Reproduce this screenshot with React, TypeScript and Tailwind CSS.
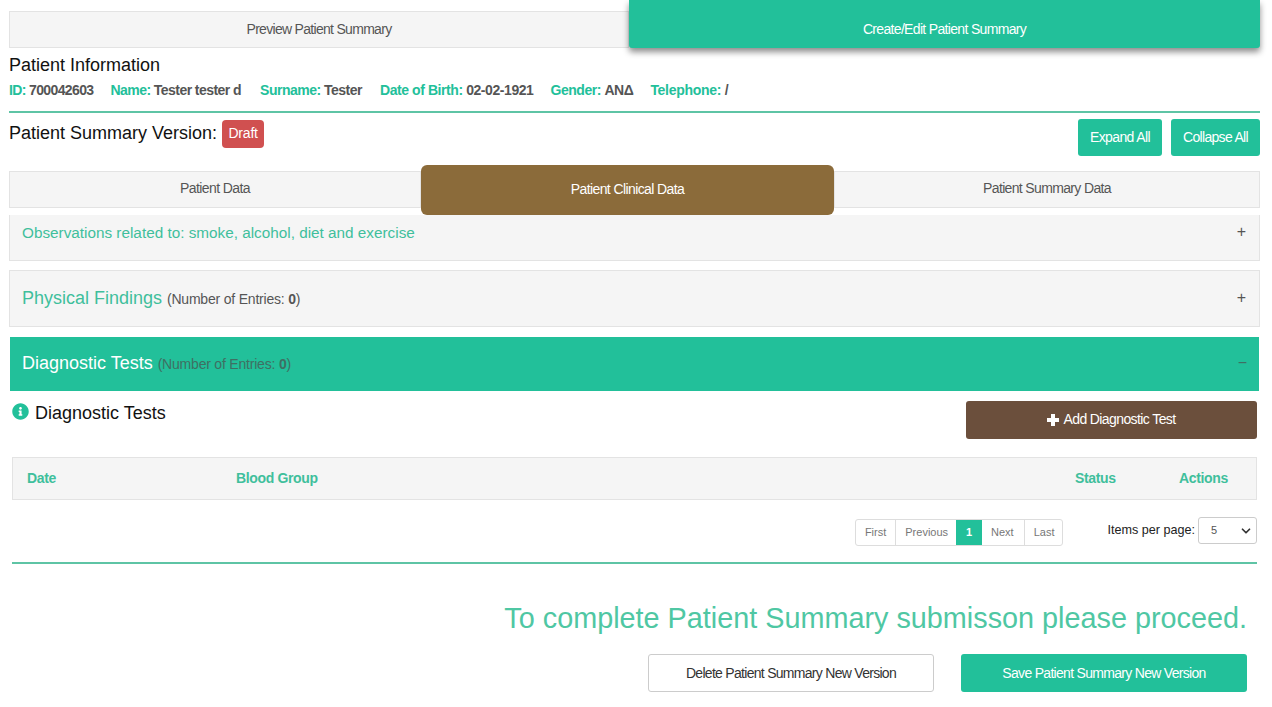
import React from "react";
import { ChevronDown } from "lucide-react";
import { FaInfoCircle } from "react-icons/fa";

const Field = ({ label, value, className }: { label: string; value: string; className: string }) => (
  <span className={`font-bold text-[#22c09a] ${className}`}>
    {label}: <span className="text-[#555]">{value}</span>
  </span>
);

const App: React.FC = () => {
  return (
    <div className="min-h-screen bg-white font-['Liberation_Sans',Arial,sans-serif] text-[14px] text-[#555] pl-[9px] pr-[12px] overflow-hidden h-[707px]">
      {/* Top tabs */}
      <div className="flex pt-[11px]">
        <div className="w-[620px] h-[37px] pb-[1px] flex items-center justify-center bg-[#f5f5f5] border border-[#e3e3e3] tracking-[-0.7px]">
          Preview Patient Summary
        </div>
        <div className="flex-1 h-[48px] -mt-[11px] pt-[10px] flex items-center justify-center bg-[#22c09a] text-white rounded-b-[3px] shadow-[0_4px_6px_rgba(0,0,0,0.45)] tracking-[-0.67px]">
          Create/Edit Patient Summary
        </div>
      </div>

      {/* Patient info */}
      <div className="mt-[6px] text-[18px] leading-[22px] text-[#111]">Patient Information</div>
      <div className="mt-[4px] flex gap-[17px] leading-[20px]">
        <Field label="ID" value="700042603" className="tracking-[-0.63px]" />
        <Field label="Name" value="Tester tester d" className="tracking-[-0.55px] mr-[2px]" />
        <Field label="Surname" value="Tester" className="tracking-[-0.5px] mr-[1px]" />
        <Field label="Date of Birth" value="02-02-1921" className="tracking-[-0.43px]" />
        <Field label="Gender" value="ΑΝΔ" className="tracking-[-0.45px]" />
        <Field label="Telephone" value="/" className="tracking-[-0.3px]" />
      </div>
      <div className="mt-[11px] h-[2px] bg-[#5ec4a5]" />

      {/* Version row */}
      <div className="mt-[6px] h-[46px] flex items-start justify-between">
        <div className="flex items-start gap-[5px]">
          <span className="mt-[3px] text-[18px] leading-[22px] text-[#111]">Patient Summary Version:</span>
          <span className="mt-[1px] w-[42px] h-[28px] pb-[2px] flex items-center justify-center bg-[#d05050] text-white rounded-[4px] tracking-[-0.2px]">
            Draft
          </span>
        </div>
        <div className="flex gap-[9px]">
          <button className="w-[84px] h-[37px] bg-[#22c09a] text-white rounded-[3px] tracking-[-0.6px]">Expand All</button>
          <button className="w-[89px] h-[37px] bg-[#22c09a] text-white rounded-[3px] tracking-[-0.7px]">Collapse All</button>
        </div>
      </div>

      {/* Section tabs */}
      <div className="mt-[6px] flex">
        <div className="w-[412px] h-[37px] pb-[3px] flex items-center justify-center bg-[#f5f5f5] border border-[#e3e3e3] tracking-[-0.6px]">
          Patient Data
        </div>
        <div className="w-[413px] h-[50px] -mt-[6px] -mb-[7px] pb-[2px] flex items-center justify-center bg-[#8b6b3a] text-white rounded-[6px] relative tracking-[-0.6px]">
          Patient Clinical Data
        </div>
        <div className="flex-1 h-[37px] pb-[3px] flex items-center justify-center bg-[#f5f5f5] border border-[#e3e3e3] tracking-[-0.65px]">
          Patient Summary Data
        </div>
      </div>

      {/* Accordions */}
      <div className="mt-[7px] h-[46px] pl-[12px] pr-[13px] pt-[8px] flex justify-between bg-[#f5f5f5] border-x border-b border-[#e3e3e3]">
        <span className="text-[15.3px] leading-[20px] text-[#3fbf9c]">Observations related to: smoke, alcohol, diet and exercise</span>
        <span className="text-[16px] leading-[18px]">+</span>
      </div>
      <div className="mt-[9px] h-[57px] pl-[12px] pr-[13px] flex items-center justify-between bg-[#f5f5f5] border border-[#e3e3e3]">
        <span>
          <span className="text-[18px] text-[#3fbf9c]">Physical Findings</span>{" "}
          <span className="ml-[1px] tracking-[-0.2px]">(Number of Entries: <b>0</b>)</span>
        </span>
        <span className="text-[16px] pb-[2px]">+</span>
      </div>
      <div className="mt-[10px] mx-[1px] h-[54px] pl-[12px] pr-[12px] pb-[2px] flex items-center justify-between bg-[#22c09a]">
        <span>
          <span className="text-[18px] text-white">Diagnostic Tests</span>{" "}
          <span className="ml-[1px] text-[#3f6f63] tracking-[-0.2px]">(Number of Entries: <b>0</b>)</span>
        </span>
        <span className="text-[16px] text-[#3f6f63]">−</span>
      </div>

      {/* Diagnostic tests content */}
      <div className="ml-[3px] mr-[3px]">
        <div className="mt-[10px] h-[38px] flex justify-between">
          <div className="flex items-start gap-[6px]">
            <FaInfoCircle className="w-[17px] h-[17px] mt-[2px] text-[#22c09a]" />
            <span className="text-[18px] leading-[24px] text-[#111]">Diagnostic Tests</span>
          </div>
          <button className="w-[291px] h-[38px] pb-[1px] flex items-center justify-center gap-[4px] bg-[#6b4f3c] text-white rounded-[3px] tracking-[-0.6px]">
            <svg viewBox="0 0 12 12" className="w-[12px] h-[12px]" fill="currentColor">
              <path d="M4 0h4v4h4v4H8v4H4V8H0V4h4z" />
            </svg>
            Add Diagnostic Test
          </button>
        </div>
        <div className="mt-[18px] h-[43px] flex items-center bg-[#f5f5f5] border border-[#e3e3e3] font-bold text-[#3fbf9c] tracking-[-0.35px] relative">
          <span className="w-[223px] pl-[14px]">Date</span>
          <span className="flex-1">Blood Group</span>
          <span className="w-[104px]">Status</span>
          <span className="w-[77px]">Actions</span>
        </div>

        {/* Pagination */}
        <div className="mt-[17px] h-[30px] flex items-start justify-end">
          <div className="mt-[2px] flex h-[27px] text-[11px] text-[#777] border border-[#ddd] rounded-[3px]">
            <span className="px-[9px] flex items-center border-r border-[#ddd]">First</span>
            <span className="pl-[9px] pr-[8px] flex items-center">Previous</span>
            <span className="w-[26px] justify-center flex items-center bg-[#22c09a] text-white font-bold">1</span>
            <span className="pl-[9px] pr-[10px] flex items-center border-r border-[#ddd]">Next</span>
            <span className="pl-[9px] pr-[8px] flex items-center">Last</span>
          </div>
          <span className="ml-[44px] mt-[4px] text-[12.6px] leading-[18px] text-[#222]">Items per page:</span>
          <div className="ml-[3px] w-[59px] h-[27px] pl-[12px] pr-[3px] flex items-center justify-between border border-[#ccc] rounded-[3px] text-[11px]">
            5 <ChevronDown className="w-[14px] h-[14px] text-[#333]" strokeWidth={3} />
          </div>
        </div>
        <div className="mt-[15px] h-[2px] bg-[#5ec4a5]" />
      </div>

      {/* Footer */}
      <div className="mr-[1px] flex flex-col items-end pr-[12px]">
        <div className="mt-[37px] text-[28.8px] leading-[34px] text-[#4fc7a3]">
          To complete Patient Summary submisson please proceed.
        </div>
        <div className="mt-[19px] flex gap-[27px]">
          <button className="w-[286px] h-[38px] bg-white border border-[#ccc] rounded-[3px] text-[#333] tracking-[-0.71px]">
            Delete Patient Summary New Version
          </button>
          <button className="w-[286px] h-[38px] bg-[#22c09a] text-white rounded-[3px] tracking-[-0.7px]">
            Save Patient Summary New Version
          </button>
        </div>
      </div>
    </div>
  );
};

export default App;
